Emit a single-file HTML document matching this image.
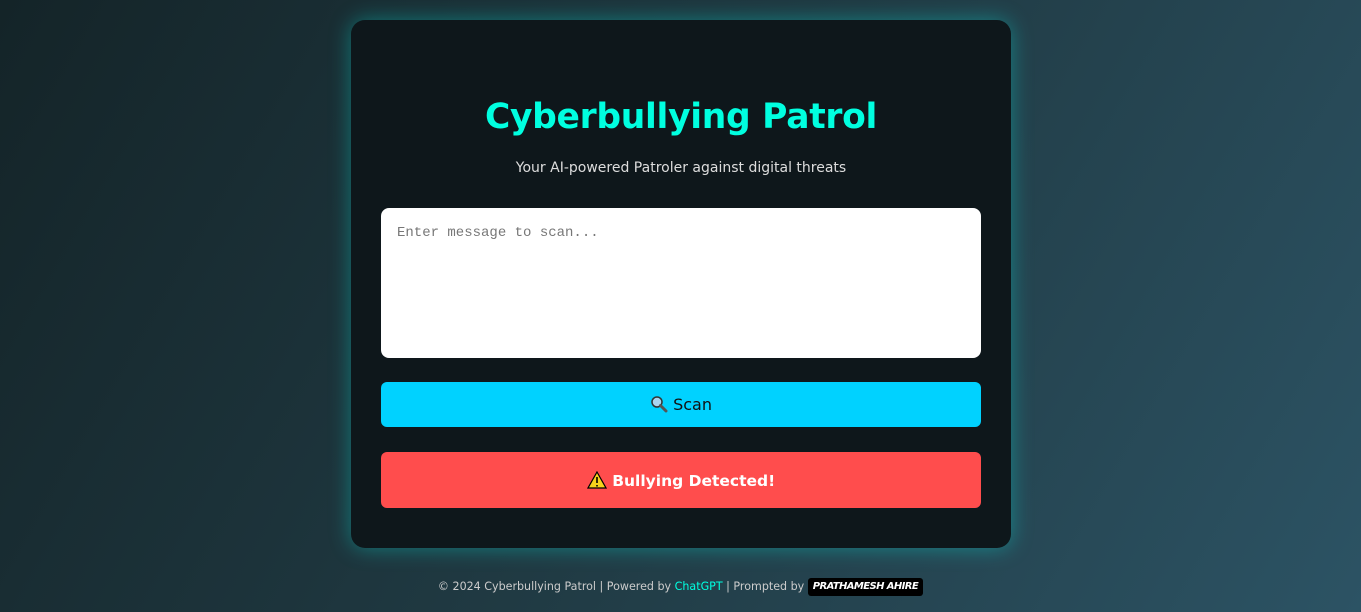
<!DOCTYPE html>
<html><head><style>
html,body{margin:0;width:1361px;height:612px;overflow:hidden;font-family:"DejaVu Sans","Liberation Sans",sans-serif;}
body{background:linear-gradient(120deg,#142428 0%,#203a43 50%,#2c5364 100%);position:relative;}
.card{position:absolute;left:351px;top:20px;width:660px;height:528px;background:#0e171b;border-radius:14px;box-shadow:0 0 22px rgba(0,255,240,0.35);}
h1{position:absolute;left:0;right:0;top:76px;margin:0;text-align:center;color:#00ffe0;font-size:34.5px;font-weight:bold;line-height:42px;letter-spacing:-0.3px;}
.sub{position:absolute;left:0;right:0;top:140px;text-align:center;color:#ddd;font-size:14px;}
.ta{position:absolute;left:30px;top:188px;width:600px;height:150px;background:#fff;border-radius:8px;box-sizing:border-box;padding:17px 16px;font-family:"Liberation Mono",monospace;font-size:14px;color:#777;}
.scan{position:absolute;left:30px;top:362px;width:600px;height:45px;background:#00d2ff;border-radius:6px;text-align:center;line-height:45px;font-size:16px;color:#111;}
.res{position:absolute;left:30px;top:432px;width:600px;height:56px;background:#ff4d4d;border-radius:6px;text-align:center;line-height:58px;font-size:15.5px;color:#fff;font-weight:bold;}
.foot{position:absolute;left:0;right:0;top:578px;text-align:center;font-size:11.1px;color:#ccc;line-height:18px;}
.foot .g{color:#00ffe0}
.badge{display:inline-block;background:#000;color:#fff;font-weight:bold;font-style:italic;font-size:10px;padding:0 5px;border-radius:3px;letter-spacing:-0.6px;vertical-align:top;}
</style></head><body>
<div class="card">
<h1>Cyberbullying Patrol</h1>
<div class="sub">Your AI-powered Patroler against digital threats</div>
<div class="ta">Enter message to scan...</div>
<div class="scan"><svg width="18" height="18" viewBox="0 0 18 18" style="vertical-align:-3px"><circle cx="7" cy="7" r="5" fill="#a8d4f0" stroke="#333" stroke-width="1.5"/><path d="M10.5 10.5L16 16" stroke="#555" stroke-width="3" stroke-linecap="round"/></svg> Scan</div>
<div class="res"><svg width="20" height="18" viewBox="0 0 20 18" style="vertical-align:-3px"><path d="M10 1L19 17H1Z" fill="#f7d21c" stroke="#000" stroke-width="1.2"/><path d="M10 6v6M10 14v1.5" stroke="#000" stroke-width="1.6"/></svg> Bullying Detected!</div>
</div>
<div class="foot">© 2024 Cyberbullying Patrol | Powered by <span class="g">ChatGPT</span> | Prompted by <span class="badge">PRATHAMESH AHIRE</span></div>
</body></html>
